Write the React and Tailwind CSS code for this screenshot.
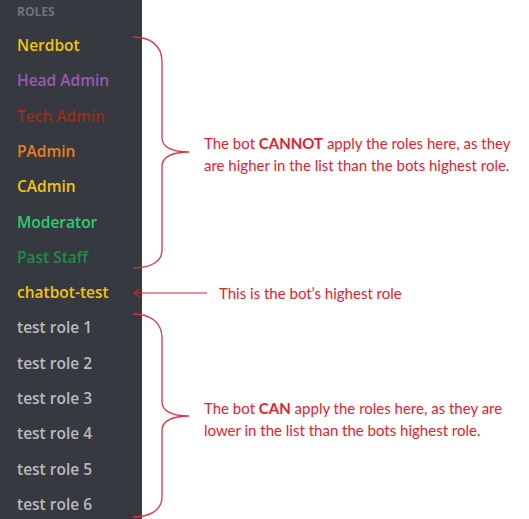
const roles = [
  { name: "Nerdbot", color: "text-[#f1c40f]" },
  { name: "Head Admin", color: "text-[#9b59b6]" },
  { name: "Tech Admin", color: "text-[#992d22]" },
  { name: "PAdmin", color: "text-[#e67e22]" },
  { name: "CAdmin", color: "text-[#f1c40f]" },
  { name: "Moderator", color: "text-[#2ecc71]" },
  { name: "Past Staff", color: "text-[#1f8b4c]" },
  { name: "chatbot-test", color: "text-[#f1c40f]" },
  { name: "test role 1", color: "text-[#b9bbbe]" },
  { name: "test role 2", color: "text-[#b9bbbe]" },
  { name: "test role 3", color: "text-[#b9bbbe]" },
  { name: "test role 4", color: "text-[#b9bbbe]" },
  { name: "test role 5", color: "text-[#b9bbbe]" },
  { name: "test role 6", color: "text-[#b9bbbe]" },
];

function Annotations() {
  return (
    <svg
      className="absolute inset-0 pointer-events-none"
      width="529"
      height="519"
      viewBox="0 0 529 519"
      fill="none"
    >
      <path
        d="M133 37 C150 37 162 45 162 62 L162 138 C162 147 172 152 189 152 C172 152 162 157 162 166 L162 250 C162 262 150 268 133 268"
        stroke="#e2323f"
        strokeWidth="1.3"
      />
      <path
        d="M133 314 C150 314 162 322 162 338 L162 402 C162 411 172 416 189 416 C172 416 162 421 162 430 L162 497 C162 510 150 517 133 517"
        stroke="#e2323f"
        strokeWidth="1.3"
      />
      <path d="M207 293 L134 293" stroke="#d8202c" strokeWidth="1.2" />
      <path d="M140 289 L134 293 L140 297" stroke="#d8202c" strokeWidth="1.2" />
    </svg>
  );
}

export default function App() {
  return (
    <div className="relative w-[529px] h-[519px] bg-white flex overflow-hidden">
      <div className="w-[142px] h-full bg-[#36393f] font-['Open_Sans',sans-serif]">
        <div className="pl-[17px] h-[24px] flex items-center text-[12px] font-bold text-[#6f737a]">
          ROLES
        </div>
        <div className="flex flex-col pt-[4px]">
          {roles.map((r) => (
            <div
              key={r.name}
              className={`pl-[17px] h-[35.3px] flex items-center text-[15.5px] font-semibold ${r.color}`}
            >
              {r.name}
            </div>
          ))}
        </div>
      </div>

      <div className="flex-1 flex flex-col pl-[62px] pt-[132px] text-[15px] leading-[22px] text-[#e8202c] font-['Lato',sans-serif]">
        <p>
          The bot <span className="font-bold">CANNOT</span> apply the roles here, as they
          <br />
          are higher in the list than the bots highest role.
        </p>
        <p className="mt-[106px] pl-[15px]">This is the bot’s highest role</p>
        <p className="mt-[93px]">
          The bot <span className="font-bold">CAN</span> apply the roles here, as they are
          <br />
          lower in the list than the bots highest role.
        </p>
      </div>

      <Annotations />
    </div>
  );
}
